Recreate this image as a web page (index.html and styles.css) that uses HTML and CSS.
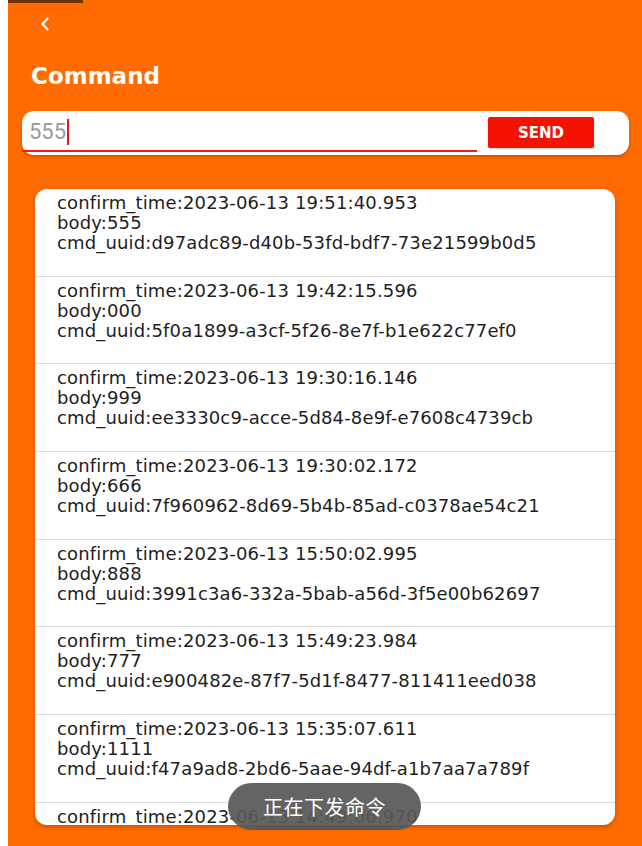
FILE: index.html
```html
<!DOCTYPE html>
<html>
<head>
<meta charset="utf-8">
<link rel="stylesheet" href="styles.css">
</head>
<body>
<div class="screen">
  <div class="status"></div>
  <svg class="back" width="10" height="14" viewBox="0 0 10 14"><path d="M7.5 1.5 L2.5 7 L7.5 12.5" fill="none" stroke="#fff" stroke-width="2.2" stroke-linecap="round" stroke-linejoin="round"/></svg>
  <h1 class="title">Command</h1>
  <div class="input-card">
    <div class="field"><span class="value">555</span><span class="cursor"></span></div>
    <button class="send">SEND</button>
  </div>
  <div class="list-card">
    <div class="item">confirm_time:2023-06-13 19:51:40.953<br>body:555<br>cmd_uuid:d97adc89-d40b-53fd-bdf7-73e21599b0d5</div>
    <div class="item">confirm_time:2023-06-13 19:42:15.596<br>body:000<br>cmd_uuid:5f0a1899-a3cf-5f26-8e7f-b1e622c77ef0</div>
    <div class="item">confirm_time:2023-06-13 19:30:16.146<br>body:999<br>cmd_uuid:ee3330c9-acce-5d84-8e9f-e7608c4739cb</div>
    <div class="item">confirm_time:2023-06-13 19:30:02.172<br>body:666<br>cmd_uuid:7f960962-8d69-5b4b-85ad-c0378ae54c21</div>
    <div class="item">confirm_time:2023-06-13 15:50:02.995<br>body:888<br>cmd_uuid:3991c3a6-332a-5bab-a56d-3f5e00b62697</div>
    <div class="item">confirm_time:2023-06-13 15:49:23.984<br>body:777<br>cmd_uuid:e900482e-87f7-5d1f-8477-811411eed038</div>
    <div class="item">confirm_time:2023-06-13 15:35:07.611<br>body:1111<br>cmd_uuid:f47a9ad8-2bd6-5aae-94df-a1b7aa7a789f</div>
    <div class="item">confirm_time:2023-06-13 14:49:06.970</div>
  </div>
  <div class="toast">正在下发命令</div>
</div>
</body>
</html>
```
FILE: styles.css
```css
html, body {
  margin: 0;
  padding: 0;
  background: #ffffff;
}
.screen {
  position: relative;
  margin-left: 8px;
  width: 634px;
  height: 846px;
  background: #ff6b00;
  display: flex;
  flex-direction: column;
  overflow: hidden;
}
.status {
  width: 75px;
  height: 3px;
  background: #6e3300;
}
.back {
  display: block;
  margin: 14px 0 0 32px;
}
.title {
  margin: 31px 0 0 23px;
  font-family: "DejaVu Sans", sans-serif;
  font-weight: bold;
  font-size: 23px;
  line-height: 28px;
  color: #ffffff;
}
.input-card {
  margin: 21px 0 0 14px;
  width: 607px;
  height: 44px;
  box-sizing: border-box;
  background: #ffffff;
  border-radius: 12px;
  box-shadow: 0 2px 3px rgba(120, 40, 0, 0.35);
  display: flex;
  align-items: flex-start;
  padding: 0 35px 0 0;
}
.field {
  width: 455px;
  height: 41px;
  box-sizing: border-box;
  border-bottom: 2px solid #ee1c1c;
  display: flex;
  align-items: center;
  padding: 2px 0 0 7px;
}
.value {
  font-family: Roboto, sans-serif;
  font-size: 22px;
  color: #9a9a9a;
  line-height: 26px;
}
.cursor {
  width: 2px;
  height: 26px;
  background: #e8141e;
  margin-left: 1px;
}
.send {
  margin: 6px 0 0 11px;
  width: 106px;
  height: 31px;
  border: none;
  border-radius: 2px;
  background: #f51200;
  color: #ffffff;
  font-family: "DejaVu Sans", sans-serif;
  font-weight: bold;
  font-size: 15px;
  padding: 0;
  box-shadow: 0 1px 2px rgba(0, 0, 0, 0.2);
}
.list-card {
  margin: 34px 0 0 27px;
  width: 580px;
  height: 636px;
  background: #ffffff;
  border-radius: 12px;
  box-shadow: 0 2px 4px rgba(120, 40, 0, 0.4);
  overflow: hidden;
  flex-shrink: 0;
}
.item {
  height: 87.7px;
  box-sizing: border-box;
  padding: 4px 0 0 22px;
  border-bottom: 1.5px solid #dedede;
  font-family: "DejaVu Sans", sans-serif;
  font-size: 18px;
  letter-spacing: 0.15px;
  line-height: 20px;
  color: #1e1e1e;
  white-space: nowrap;
}
.toast {
  position: absolute;
  left: 220px;
  top: 783px;
  width: 193px;
  height: 47px;
  border-radius: 24px;
  background: rgba(88, 88, 88, 0.93);
  color: #ffffff;
  font-family: "Noto Sans CJK SC", sans-serif;
  font-size: 20px;
  letter-spacing: 0.5px;
  display: flex;
  align-items: center;
  justify-content: center;
}
```
